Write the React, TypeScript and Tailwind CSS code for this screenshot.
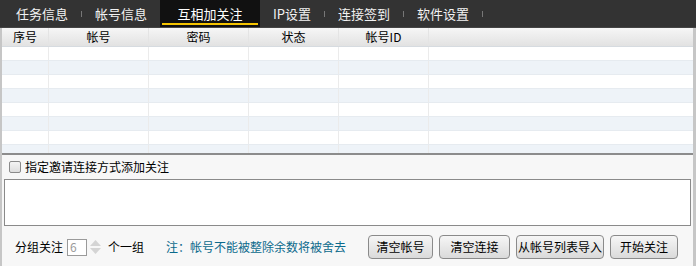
const tabs = ["任务信息", "帐号信息", "互相加关注", "IP设置", "连接签到", "软件设置"];
const active = 2;

const columns = [
  { label: "序号", w: "w-[47px]" },
  { label: "帐号", w: "w-[100px]" },
  { label: "密码", w: "w-[100px]" },
  { label: "状态", w: "w-[90px]" },
  { label: "帐号ID", w: "w-[90px]" },
];

const buttons = [
  { label: "清空帐号", w: "w-[65px]" },
  { label: "清空连接", w: "w-[71px]" },
  { label: "从帐号列表导入", w: "w-[88px]" },
  { label: "开始关注", w: "w-[68px]" },
];

function Separator() {
  return <span className="w-px h-[6px] bg-[#777]" />;
}

function TabBar() {
  return (
    <div className="flex items-stretch h-[28px] bg-[#333] pl-[3px] border-b border-[#444]">
      {tabs.map((t, i) => {
        const isActive = i === active;
        const nextActive = i + 1 === active;
        return (
          <div key={t} className="flex items-center">
            {isActive ? (
              <div className="relative flex items-center justify-center w-[100px] h-full bg-[#111] text-white text-[13px]">
                {t}
                <span className="absolute left-[2px] right-[2px] bottom-[2px] h-[2px] bg-[#f5c400]" />
              </div>
            ) : (
              <div className="flex items-center h-full px-[13px] text-[13px] text-[#f2f2f2]">{t}</div>
            )}
            {!isActive && !nextActive && <Separator />}
          </div>
        );
      })}
    </div>
  );
}

function Table() {
  const rows = Array.from({ length: 8 });
  return (
    <div className="flex flex-col">
      <div className="flex h-[19px] bg-gradient-to-b from-[#f6f6f6] to-[#e2e2e2] border-b border-[#d6dbe0]">
        {columns.map((c) => (
          <div
            key={c.label}
            className={`${c.w} flex items-center justify-center text-[12px] text-black border-r border-[#e4e4e4]`}
          >
            {c.label}
          </div>
        ))}
        <div className="flex-1" />
      </div>
      <div className="h-[106px] overflow-hidden">
        {rows.map((_, i) => (
          <div
            key={i}
            className={`flex h-[14px] border-b border-[#e6ebf0] ${i % 2 === 0 ? "bg-white" : "bg-[#eef3f8]"}`}
          >
            {columns.map((c) => (
              <div key={c.label} className={`${c.w} border-r border-[#ebebeb]`} />
            ))}
            <div className="flex-1" />
          </div>
        ))}
      </div>
    </div>
  );
}

function SpinBox() {
  return (
    <div className="flex items-center">
      <div className="w-[20px] h-[17px] border border-[#9a9a9a] bg-white flex items-center pl-[2px] text-[12px] text-[#9a9a9a]">
        6
      </div>
      <div className="flex flex-col items-center justify-center w-[16px] gap-[2px]">
        <svg width="11" height="6" viewBox="0 0 11 6">
          <polygon points="5.5,0 11,6 0,6" fill="#d4d4d4" />
        </svg>
        <svg width="11" height="6" viewBox="0 0 11 6">
          <polygon points="0,0 11,0 5.5,6" fill="#d4d4d4" />
        </svg>
      </div>
    </div>
  );
}

export default function App() {
  return (
    <div
      className="w-[696px] h-[266px] overflow-hidden flex flex-col bg-[#f7f7f7]"
      style={{ fontFamily: '"Noto Sans CJK SC", "Liberation Sans", sans-serif' }}
    >
      <TabBar />
      <div className="flex-1 flex flex-col border-l-2 border-r-[3px] border-[#c6c6c6]">
        <Table />
        <div className="flex-1 flex flex-col border-t-2 border-[#8c8c8c] bg-[#f7f7f7]">
          <label className="flex items-center gap-[4px] h-[19px] mt-[2px] pl-[7px] text-[12px] text-black">
            <span className="w-[12px] h-[12px] border border-[#8a8a8a] rounded-[2px] bg-gradient-to-b from-[#f4f4f4] to-[#dedede]" />
            指定邀请连接方式添加关注
          </label>
          <div className="mx-[2px] mt-[3px] h-[47px] border border-[#8a8a8a] bg-white" />
          <div className="flex items-center h-[34px] mt-[4px]">
            <div className="flex items-center pl-[13px] text-[12px] text-black">
              <span className="mr-[4px]">分组关注</span>
              <SpinBox />
              <span className="ml-[5px]">个一组</span>
              <span className="ml-[22px] text-[#0b6a8c]">注：帐号不能被整除余数将被舍去</span>
            </div>
            <div className="flex items-center gap-[6px] ml-auto mr-[15px]">
              {buttons.map((b) => (
                <button
                  key={b.label}
                  className={`${b.w} h-[24px] rounded-[4px] border border-[#8a8a8a] bg-gradient-to-b from-[#f6f6f6] to-[#dadada] text-[12px] text-black flex items-center justify-center`}
                >
                  {b.label}
                </button>
              ))}
            </div>
          </div>
        </div>
      </div>
    </div>
  );
}
